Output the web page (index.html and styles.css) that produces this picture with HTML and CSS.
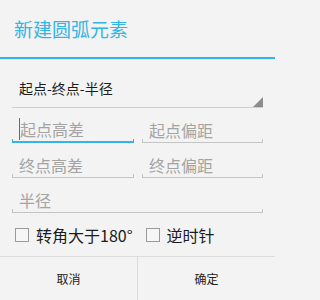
FILE: index.html
```html
<!DOCTYPE html>
<html>
<head>
<meta charset="utf-8">
<link rel="stylesheet" href="styles.css">
</head>
<body>
<div class="dialog">
  <div class="header"><span class="title">新建圆弧元素</span></div>
  <div class="divider"></div>
  <div class="content">
    <div class="spinner">
      <span class="spinner-text">起点-终点-半径</span>
      <svg class="spinner-arrow" width="10" height="10" viewBox="0 0 10 10"><polygon points="10,0 10,10 0,10" fill="#8c8c8c"/></svg>
    </div>
    <div class="fields">
      <div class="field focused">
        <div class="hint"><span class="cursor"></span>起点高差</div>
        <div class="line"></div>
      </div>
      <div class="field">
        <div class="hint">起点偏距</div>
        <div class="line"></div>
      </div>
      <div class="field">
        <div class="hint">终点高差</div>
        <div class="line"></div>
      </div>
      <div class="field">
        <div class="hint">终点偏距</div>
        <div class="line"></div>
      </div>
      <div class="field wide">
        <div class="hint">半径</div>
        <div class="line"></div>
      </div>
    </div>
    <div class="checks">
      <label class="check"><span class="box"></span><span class="check-text">转角大于180°</span></label>
      <label class="check"><span class="box"></span><span class="check-text">逆时针</span></label>
    </div>
  </div>
  <div class="buttons">
    <div class="btn first">取消</div>
    <div class="btn">确定</div>
  </div>
</div>
</body>
</html>
```

FILE: styles.css
```css
html, body {
  margin: 0;
  padding: 0;
  background: #f3f3f3;
}
body {
  width: 275px;
  height: 300px;
  overflow: hidden;
  font-family: "Noto Sans CJK SC", "Noto Sans", sans-serif;
}
.dialog {
  display: flex;
  flex-direction: column;
  height: 300px;
}
.header {
  height: 57px;
  display: flex;
  align-items: center;
  padding-left: 14px;
}
.title {
  font-size: 19px;
  line-height: 24px;
  color: #33b5e5;
}
.divider {
  height: 2px;
  background: #33b5e5;
}
.content {
  padding: 0 12px;
}
.spinner {
  height: 49px;
  box-sizing: border-box;
  border-bottom: 1px solid #cfcfcf;
  display: flex;
  align-items: flex-end;
  justify-content: space-between;
}
.spinner-text {
  font-size: 14px;
  line-height: 20px;
  color: #1c1c1c;
  padding-left: 7px;
  margin-bottom: 9px;
}
.spinner-arrow {
  display: block;
}
.fields {
  display: grid;
  grid-template-columns: 122px 121px;
  column-gap: 8px;
}
.field {
  height: 35px;
  display: flex;
  flex-direction: column;
  justify-content: flex-end;
}
.field.wide {
  grid-column: 1 / 3;
}
.hint {
  font-size: 16px;
  line-height: 20px;
  color: #a3a3a3;
  padding-left: 7px;
  margin-bottom: -1px;
  display: flex;
  align-items: center;
}
.cursor {
  display: inline-block;
  width: 1px;
  height: 22px;
  background: #6a6a6a;
  margin-right: 0;
}
.focused .hint {
  padding-left: 7px;
}
.line {
  height: 3px;
  border: 1px solid #c4c4c4;
  border-top: none;
}
.focused .line {
  border-color: #33b5e5;
  border-bottom-width: 2px;
  height: 2px;
}
.checks {
  height: 43px;
  display: flex;
  align-items: center;
  padding-left: 3px;
}
.check {
  display: flex;
  align-items: center;
  margin-right: 13px;
}
.box {
  width: 12px;
  height: 12px;
  border: 1px solid #9a9a9a;
  background: #f6f6f6;
  margin-right: 7px;
}
.check-text {
  font-size: 16px;
  line-height: 20px;
  color: #1c1c1c;
}
.buttons {
  flex: 1;
  display: flex;
  border-top: 1px solid #dcdcdc;
}
.btn {
  flex: 1;
  display: flex;
  align-items: center;
  justify-content: center;
  font-size: 12px;
  color: #222;
}
.btn.first {
  flex: 0 0 137px;
  border-right: 1px solid #dcdcdc;
}
```
